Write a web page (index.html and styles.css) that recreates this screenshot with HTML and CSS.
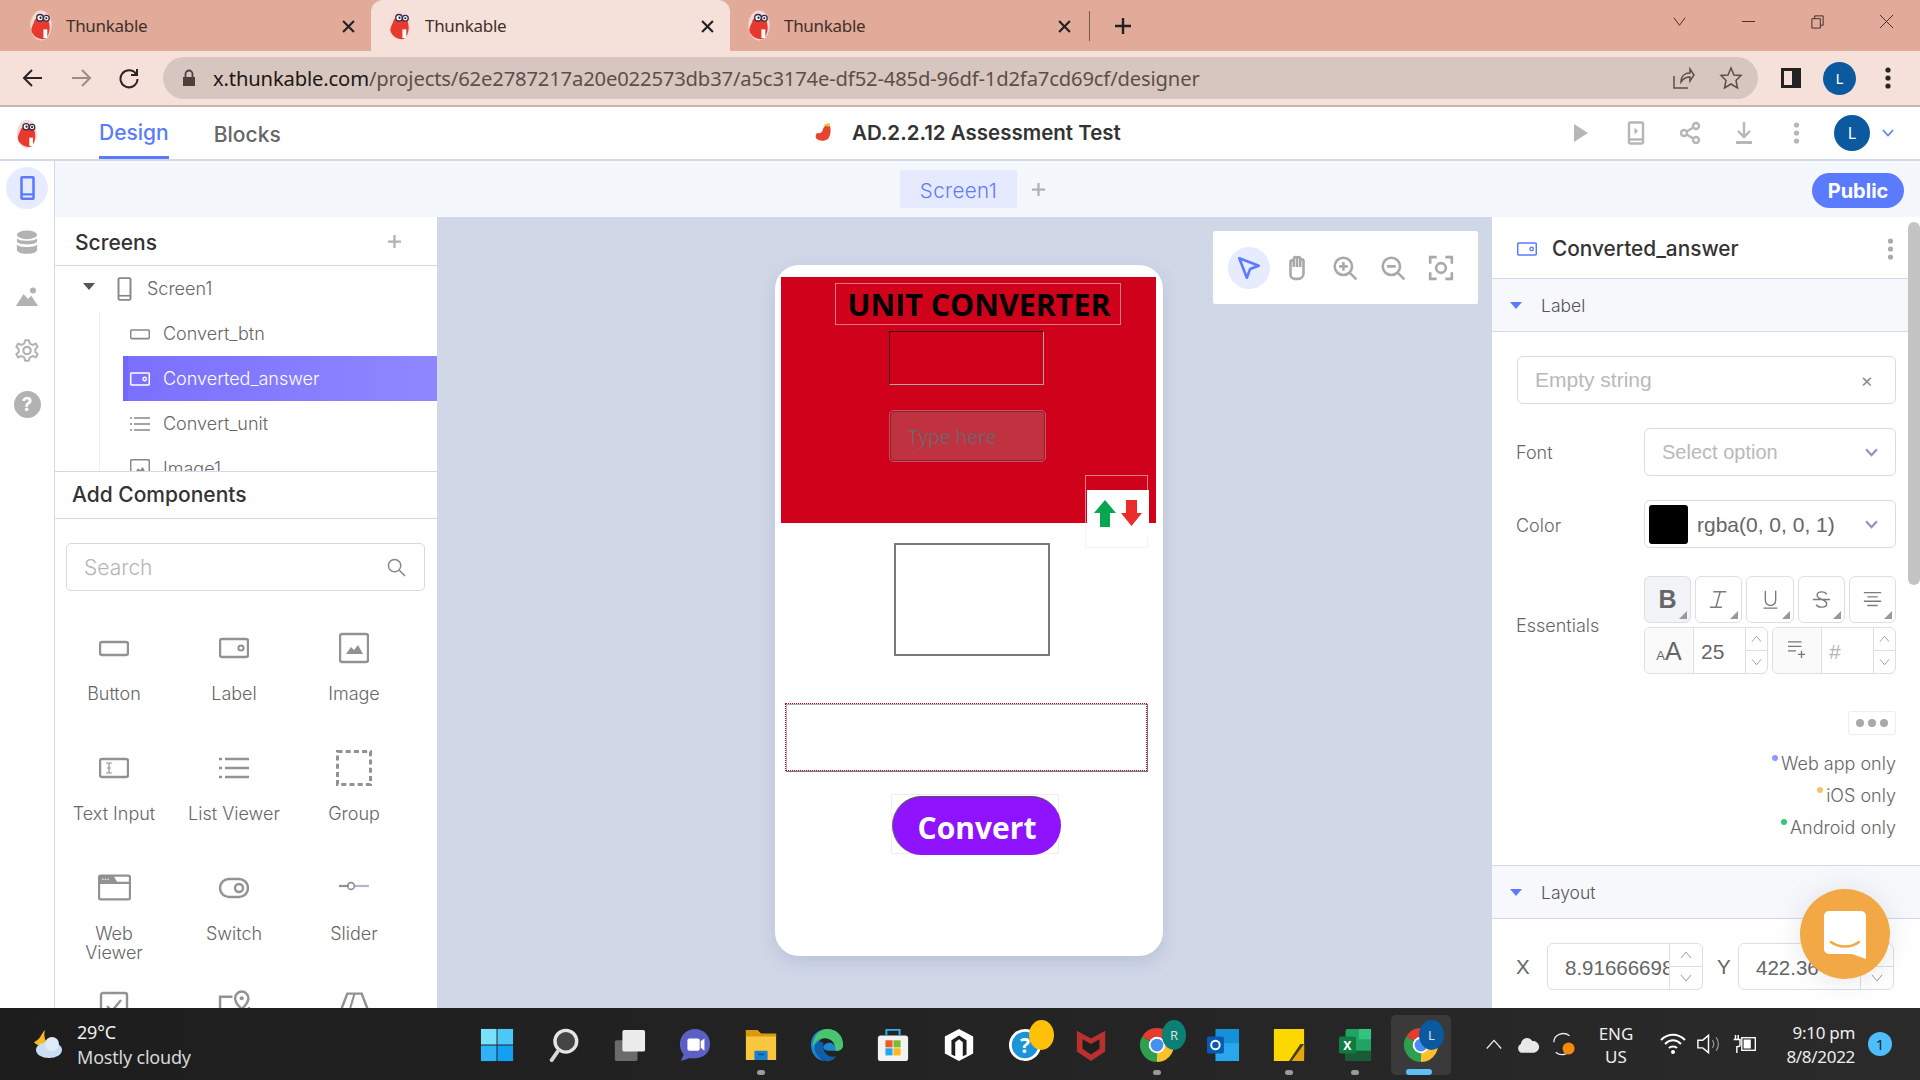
FILE: index.html
```html
<!DOCTYPE html>
<html lang="en">
<head>
<meta charset="utf-8">
<title>Thunkable</title>
<link rel="stylesheet" href="styles.css">
</head>
<body>
<svg class="defs" width="0" height="0">
  <symbol id="worm" viewBox="0 0 24 32">
    <ellipse cx="12" cy="16" rx="11" ry="15.5" fill="#f7d9d6"/>
    <path d="M5 12C6 6 17 6 20 12C22 18 21 26 16 30C10 31 3 27 2 21C2 17 4 15 5 12Z" fill="#e8392f"/>
    <circle cx="11" cy="8" r="3.4" fill="#fff" stroke="#3a2a4a" stroke-width="1.4"/>
    <circle cx="17.5" cy="8.5" r="3" fill="#fff" stroke="#3a2a4a" stroke-width="1.4"/>
    <circle cx="11.5" cy="8" r="1.2" fill="#222"/><circle cx="17.5" cy="8.5" r="1.1" fill="#222"/>
    <rect x="14.5" y="20" width="4" height="9" fill="#fff"/>
  </symbol>
  <symbol id="i-button" viewBox="0 0 30 30"><rect x="1" y="9" width="28" height="13" rx="2" fill="none" stroke="currentColor" stroke-width="2.4"/></symbol>
  <symbol id="i-label" viewBox="0 0 30 30"><rect x="1" y="6" width="28" height="18" rx="2" fill="none" stroke="currentColor" stroke-width="2.4"/><circle cx="22" cy="15" r="2.6" fill="none" stroke="currentColor" stroke-width="2"/></symbol>
  <symbol id="i-image" viewBox="0 0 30 30"><rect x="1" y="1" width="28" height="28" rx="2" fill="none" stroke="currentColor" stroke-width="2.4"/><path d="M7 21L12 14L15 17L19 12L24 21Z" fill="currentColor"/></symbol>
  <symbol id="i-input" viewBox="0 0 30 30"><rect x="1" y="6" width="28" height="18" rx="2" fill="none" stroke="currentColor" stroke-width="2.4"/><path d="M7 10H13M7 20H13M10 10V20M8 15H12" fill="none" stroke="currentColor" stroke-width="1.2"/></symbol>
  <symbol id="i-list" viewBox="0 0 30 30"><path d="M6 6H30M6 15H30M6 24H30" stroke="currentColor" stroke-width="2.4" fill="none"/><path d="M0 6H3M0 15H3M0 24H3" stroke="currentColor" stroke-width="2.4" fill="none"/></symbol>
  <symbol id="i-group" viewBox="0 0 36 36"><rect x="1.5" y="1.5" width="33" height="33" fill="none" stroke="currentColor" stroke-width="3" stroke-dasharray="5 3.2"/></symbol>
  <symbol id="i-web" viewBox="0 0 32 26"><rect x="1" y="1" width="30" height="23" rx="1.5" fill="none" stroke="currentColor" stroke-width="2.2"/><path d="M1 8H31" stroke="currentColor" stroke-width="2.2"/><path d="M1 1H15L19 8H1Z" fill="currentColor"/><path d="M4 4.5H11" stroke="#fff" stroke-width="1" stroke-dasharray="1.5 1"/></symbol>
  <symbol id="i-switch" viewBox="0 0 30 30"><rect x="1" y="6" width="28" height="18" rx="9" fill="none" stroke="currentColor" stroke-width="2.4"/><circle cx="20" cy="15" r="4" fill="none" stroke="currentColor" stroke-width="2.4"/></symbol>
  <symbol id="i-slider" viewBox="0 0 30 30"><path d="M0 13H10" stroke="currentColor" stroke-width="2.2"/><path d="M16 13H30" stroke="#b6b2d2" stroke-width="2.2"/><circle cx="12" cy="13" r="3.4" fill="none" stroke="currentColor" stroke-width="1.6"/></symbol>
  <symbol id="i-check" viewBox="0 0 30 30"><rect x="2" y="2" width="26" height="26" rx="2" fill="none" stroke="currentColor" stroke-width="2.4"/><path d="M8 15L13 20L22 9" fill="none" stroke="currentColor" stroke-width="2.4"/></symbol>
  <symbol id="i-map" viewBox="0 0 32 30"><path d="M14 6H2V29H30V16" fill="none" stroke="currentColor" stroke-width="2.4"/><path d="M23 1a6.5 6.5 0 0 1 6.500 6.500C29.500 12 23 18 23 18S16.500 12 16.500 7.500A6.500 6.500 0 0 1 23 1Z" fill="none" stroke="currentColor" stroke-width="2.4"/><circle cx="23" cy="7.500" r="2" fill="currentColor"/></symbol>
  <symbol id="i-map3" viewBox="0 0 32 30"><path d="M1 24L9 3H23L31 24" fill="none" stroke="currentColor" stroke-width="2.4"/><path d="M16 3L11 20" stroke="currentColor" stroke-width="2"/><circle cx="11" cy="23" r="4" fill="none" stroke="currentColor" stroke-width="2"/></symbol>
  <symbol id="i-phone" viewBox="0 0 20 32"><rect x="2" y="1.500" width="16" height="29" rx="1.500" fill="none" stroke="currentColor" stroke-width="2.600"/><path d="M2 25H18" stroke="currentColor" stroke-width="2.200"/></symbol>
  <symbol id="i-phone-solid" viewBox="0 0 20 32"><rect x="2" y="1.500" width="16" height="29" rx="1.500" fill="none" stroke="currentColor" stroke-width="3.400"/><path d="M2 24.500H18" stroke="currentColor" stroke-width="3"/></symbol>
  <symbol id="i-chrome" viewBox="0 0 32 32">
    <path d="M2.140 8A16 16 0 0 1 29.860 8L16 16Z" fill="#e33b2e"/><path d="M29.860 8A16 16 0 0 1 16 32L16 16Z" fill="#fbc02d"/><path d="M16 32A16 16 0 0 1 2.140 8L16 16Z" fill="#2e9e4f"/>
    <circle cx="16" cy="16" r="7.800" fill="#fff"/><circle cx="16" cy="16" r="6" fill="#4a8df0"/>
  </symbol>
  <symbol id="i-dots" viewBox="0 0 6 24"><circle cx="3" cy="4" r="2.600" fill="currentColor"/><circle cx="3" cy="12" r="2.600" fill="currentColor"/><circle cx="3" cy="20" r="2.600" fill="currentColor"/></symbol>
</svg>

<div class="tabstrip">
  <div class="tab">
    <svg class="favicon"><use href="#worm"/></svg><span class="tab-title">Thunkable</span>
    <svg class="tab-x" viewBox="0 0 12 12"><path d="M1 1L11 11M11 1L1 11"/></svg>
  </div>
  <div class="tab tab-active">
    <svg class="favicon"><use href="#worm"/></svg><span class="tab-title">Thunkable</span>
    <svg class="tab-x" viewBox="0 0 12 12"><path d="M1 1L11 11M11 1L1 11"/></svg>
  </div>
  <div class="tab tab-third">
    <svg class="favicon"><use href="#worm"/></svg><span class="tab-title">Thunkable</span>
    <svg class="tab-x" viewBox="0 0 12 12"><path d="M1 1L11 11M11 1L1 11"/></svg>
  </div>
  <div class="tab-sep"></div>
  <svg class="tab-plus" viewBox="0 0 18 18"><path d="M9 1V17M1 9H17"/></svg>
  <div class="win-controls">
    <svg class="win" viewBox="0 0 16 16"><path d="M2 4L8 12L14 4"/></svg>
    <svg class="win" viewBox="0 0 16 16"><path d="M1 8H15"/></svg>
    <svg class="win" viewBox="0 0 16 16"><path d="M2 5H11V15H2ZM5 5V2H14V12H11"/></svg>
    <svg class="win" viewBox="0 0 16 16"><path d="M1 1L15 15M15 1L1 15"/></svg>
  </div>
</div>

<div class="toolbar">
  <svg class="nav" viewBox="0 0 22 22"><path d="M20 11H3M10 3L2 11L10 19"/></svg>
  <svg class="nav nav-off" viewBox="0 0 22 22"><path d="M2 11H19M12 3L20 11L12 19"/></svg>
  <svg class="nav" viewBox="0 0 22 22"><path d="M18 7A8.500 8.500 0 1 0 19.500 12M19 2V8H13"/></svg>
  <div class="omnibox">
    <svg class="lock" viewBox="0 0 14 18"><path d="M1 8H13V17H1Z" fill="#4a413e"/><path d="M3.500 8V5A3.500 3.500 0 0 1 10.500 5V8" fill="none" stroke="#4a413e" stroke-width="1.800"/></svg>
    <span class="url"><span class="url-host">x.thunkable.com</span>/projects/62e2787217a20e022573db37/a5c3174e-df52-485d-96df-1d2fa7cd69cf/designer</span>
    <svg class="omni-icon" viewBox="0 0 24 24"><path d="M3 10V22H17M10 16C10 10 14 7 19 7V3L23 9L19 15V11C15 11 12 13 10 16Z"/></svg>
    <svg class="omni-icon" viewBox="0 0 24 24"><path d="M12 2L15 9L22 9.500L17 14.500L18.500 22L12 18L5.500 22L7 14.500L2 9.500L9 9Z"/></svg>
  </div>
  <div class="side-panel"></div>
  <div class="avatar avatar-sm">L</div>
  <svg class="tool-dots"><use href="#i-dots"/></svg>
</div>

<header class="appbar">
  <svg class="app-logo"><use href="#worm"/></svg>
  <nav class="app-tabs">
    <span class="app-tab app-tab-on">Design</span>
    <span class="app-tab app-tab-off">Blocks</span>
  </nav>
  <div class="app-title">
    <svg class="title-logo" viewBox="0 0 20 22"><path d="M4 12C7 13 9 12 10 8C11 5 14 3 17 5C18 9 18 14 15 18C11 21 5 20 3 17C2 15 3 13 4 12Z" fill="#e8452f"/><path d="M10 4L17 2L16 6Z" fill="#f2b632"/></svg>
    <span>AD.2.2.12 Assessment Test</span>
  </div>
  <div class="app-actions">
    <svg class="act" viewBox="0 0 24 24"><path class="fill" d="M6 3L20 12L6 21Z"/></svg>
    <svg class="act" viewBox="0 0 24 24"><rect class="line" x="5" y="1.500" width="14" height="21" rx="1.500"/><path class="line" d="M5 18.500H19"/><path class="fill" d="M10.500 6.500L14 10L10.500 13.500Z"/></svg>
    <svg class="act" viewBox="0 0 24 24"><circle class="line" cx="18" cy="5" r="3"/><circle class="line" cx="6" cy="12" r="3"/><circle class="line" cx="18" cy="19" r="3"/><path class="line" d="M8.600 10.500L15.400 6.500M8.600 13.500L15.400 17.500"/></svg>
    <svg class="act" viewBox="0 0 24 24"><path class="line" d="M12 1V15M6 10L12 16L18 10"/><path class="line thick" d="M4 21.500H20"/></svg>
    <svg class="act act-dots"><use href="#i-dots"/></svg>
    <div class="avatar avatar-lg">L</div>
    <svg class="act-chev" viewBox="0 0 12 8"><path d="M1 1L6 6.500L11 1"/></svg>
  </div>
</header>

<div class="main">
  <aside class="rail">
    <div class="rail-item rail-on"><svg class="rail-phone"><use href="#i-phone-solid"/></svg></div>
    <div class="rail-item">
      <svg class="rail-ic" viewBox="0 0 24 26"><ellipse cx="12" cy="5" rx="10.500" ry="4.500" fill="#b2b2b2"/><path d="M1.500 8.500C3 12 21 12 22.500 8.500V12C21 16 3 16 1.500 12ZM1.500 15C3 18.500 21 18.500 22.500 15V21C21 26 3 26 1.500 21Z" fill="#b2b2b2"/></svg>
    </div>
    <div class="rail-item">
      <svg class="rail-ic" viewBox="0 0 28 24"><circle cx="21" cy="5" r="3.500" fill="#b2b2b2"/><path d="M1 23L10 9L15 15L19 11L27 23Z" fill="#b2b2b2"/></svg>
    </div>
    <div class="rail-item">
      <svg class="rail-ic" viewBox="0 0 26 26"><circle cx="13" cy="13" r="4" fill="none" stroke="#b2b2b2" stroke-width="2.400"/><path d="M11 2H15L16 5.500L19 7L22.500 5.500L24.500 9L22 11.500V14.500L24.500 17L22.500 20.500L19 19L16 20.500L15 24H11L10 20.500L7 19L3.500 20.500L1.500 17L4 14.500V11.500L1.500 9L3.500 5.500L7 7L10 5.500Z" fill="none" stroke="#b2b2b2" stroke-width="2.200" stroke-linejoin="round"/></svg>
    </div>
    <div class="rail-item">
      <div class="rail-help">?</div>
    </div>
  </aside>

  <div class="workspace">
    <div class="subbar">
      <div class="screen-tab">Screen1</div>
      <svg class="subbar-plus" viewBox="0 0 16 16"><path d="M8 1V15M1 8H15"/></svg>
      <div class="public">Public</div>
    </div>
    <div class="work">
      <section class="left">
        <div class="screens-head">
          <span>Screens</span>
          <svg class="screens-plus" viewBox="0 0 16 16"><path d="M8 1V15M1 8H15"/></svg>
        </div>
        <div class="tree">
          <div class="tree-guide"></div>
          <div class="tree-root">
            <span class="caret"></span>
            <svg class="tree-phone"><use href="#i-phone"/></svg>
            <span>Screen1</span>
          </div>
          <div class="tree-row"><svg class="tree-ic"><use href="#i-button"/></svg><span>Convert_btn</span></div>
          <div class="tree-row tree-sel"><svg class="tree-ic"><use href="#i-label"/></svg><span>Converted_answer</span></div>
          <div class="tree-row"><svg class="tree-ic"><use href="#i-list"/></svg><span>Convert_unit</span></div>
          <div class="tree-row"><svg class="tree-ic"><use href="#i-image"/></svg><span>Image1</span></div>
        </div>
        <div class="add-head">Add Components</div>
        <div class="search-wrap">
          <div class="search">
            <span>Search</span>
            <svg class="search-ic" viewBox="0 0 20 20"><circle cx="8" cy="8" r="6.500"/><path d="M13 13L19 19"/></svg>
          </div>
        </div>
        <div class="comp-grid">
          <div class="comp"><svg class="comp-ic"><use href="#i-button"/></svg><span>Button</span></div>
          <div class="comp"><svg class="comp-ic"><use href="#i-label"/></svg><span>Label</span></div>
          <div class="comp"><svg class="comp-ic"><use href="#i-image"/></svg><span>Image</span></div>
          <div class="comp"><svg class="comp-ic"><use href="#i-input"/></svg><span>Text Input</span></div>
          <div class="comp"><svg class="comp-ic"><use href="#i-list"/></svg><span>List Viewer</span></div>
          <div class="comp"><svg class="comp-ic comp-ic-lg"><use href="#i-group"/></svg><span>Group</span></div>
          <div class="comp"><svg class="comp-ic comp-ic-web"><use href="#i-web"/></svg><span>Web<br>Viewer</span></div>
          <div class="comp"><svg class="comp-ic"><use href="#i-switch"/></svg><span>Switch</span></div>
          <div class="comp"><svg class="comp-ic"><use href="#i-slider"/></svg><span>Slider</span></div>
          <div class="comp comp-last"><svg class="comp-ic"><use href="#i-check"/></svg></div>
          <div class="comp comp-last"><svg class="comp-ic comp-ic-web"><use href="#i-map"/></svg></div>
          <div class="comp comp-last"><svg class="comp-ic comp-ic-web"><use href="#i-map3"/></svg></div>
        </div>
      </section>

      <section class="canvas">
        <div class="floatbar">
          <div class="fb fb-on"><svg viewBox="0 0 24 24"><path class="fb-blue" d="M3 3L21 10L13 13L10 21Z"/></svg></div>
          <div class="fb"><svg viewBox="0 0 24 24"><path class="fb-gray" d="M6 13V6.500a1.500 1.500 0 0 1 3 0V11V3.500a1.500 1.500 0 0 1 3 0V11V3.500a1.500 1.500 0 0 1 3 0V11V5.500a1.500 1.500 0 0 1 3 0V17a5 5 0 0 1-5 5H10a4 4 0 0 1-4-4Z"/></svg></div>
          <div class="fb"><svg viewBox="0 0 24 24"><circle class="fb-gray" cx="10.500" cy="10.500" r="8"/><path class="fb-gray" d="M16.500 16.500L22.500 22.500M10.500 6.500V14.500M6.500 10.500H14.500"/></svg></div>
          <div class="fb"><svg viewBox="0 0 24 24"><circle class="fb-gray" cx="10.500" cy="10.500" r="8"/><path class="fb-gray" d="M16.500 16.500L22.500 22.500M6.500 10.500H14.500"/></svg></div>
          <div class="fb"><svg viewBox="0 0 24 24"><circle class="fb-gray" cx="12" cy="12" r="4.500"/><path class="fb-gray" d="M2 8V2H8M16 2H22V8M22 16V22H16M8 22H2V16"/></svg></div>
        </div>
        <div class="phone">
          <div class="ph-red"></div>
          <div class="ph-title">UNIT CONVERTER</div>
          <div class="ph-box1"></div>
          <div class="ph-input">Type here</div>
          <div class="ph-arrow-out"></div>
          <div class="ph-arrow">
            <svg class="ph-arrow-svg" viewBox="0 0 48 27"><path d="M11 0L22 13H16V27H6V13H0Z" fill="#08a650"/><path d="M32 0H43V13H48L37.500 26L27 13H32Z" fill="#ed2a2a"/></svg>
          </div>
          <div class="ph-box2"></div>
          <div class="ph-box3"></div>
          <div class="ph-btn-out"></div>
          <div class="ph-btn">Convert</div>
        </div>
      </section>

      <section class="right">
        <div class="r-head">
          <svg class="r-head-ic"><use href="#i-label"/></svg>
          <span>Converted_answer</span>
          <svg class="r-head-dots"><use href="#i-dots"/></svg>
        </div>
        <div class="r-section"><span class="r-caret"></span><span>Label</span></div>
        <div class="r-body">
          <div class="field field-wide"><span class="ph-text ph-text-lg">Empty string</span><span class="field-x">×</span></div>
          <div class="r-row r-row-font">
            <span class="r-label">Font</span>
            <div class="field field-sel"><span class="ph-text">Select option</span><svg class="sel-chev" viewBox="0 0 12 8"><path d="M1 1L6 6.500L11 1"/></svg></div>
          </div>
          <div class="r-row r-row-color">
            <span class="r-label r-label-low">Color</span>
            <div class="field field-sel field-color"><span class="swatch"></span><span class="color-val">rgba(0, 0, 0, 1)</span><svg class="sel-chev" viewBox="0 0 12 8"><path d="M1 1L6 6.500L11 1"/></svg></div>
          </div>
          <div class="r-row r-row-ess">
            <span class="r-label">Essentials</span>
            <div class="ess">
              <div class="ess-top">
                <div class="ess-btn ess-on"><b class="ess-b">B</b></div>
                <div class="ess-btn"><svg class="ess-ic" viewBox="0 0 22 22"><path d="M5 2H20M13 2L8 20M1 20H15"/></svg></div>
                <div class="ess-btn"><svg class="ess-ic" viewBox="0 0 22 22"><path d="M5 1V12A6 6 0 0 0 17 12V1M3 21H19"/></svg></div>
                <div class="ess-btn"><svg class="ess-ic" viewBox="0 0 22 22"><path d="M17 5C15 1 6 1 6 6C6 12 17 10 17 16C17 21 7 21 5 17M1 11H21"/></svg></div>
                <div class="ess-btn"><svg class="ess-ic" viewBox="0 0 22 22"><path d="M1 3H21M5 8H17M1 13H21M5 18H17"/></svg></div>
              </div>
              <div class="ess-bot">
                <div class="spin">
                  <div class="spin-lead"><span class="aa-s">A</span><span class="aa-l">A</span></div>
                  <div class="spin-val">25</div>
                  <div class="spin-arrows"><svg viewBox="0 0 12 8"><path d="M1 7L6 1L11 7"/></svg><svg viewBox="0 0 12 8"><path d="M1 1L6 7L11 1"/></svg></div>
                </div>
                <div class="spin">
                  <div class="spin-lead"><svg class="lh-ic" viewBox="0 0 20 20"><path d="M0 2H15M0 7H15M0 12H9M11 16H19M15 12V20"/></svg></div>
                  <div class="spin-val spin-ph">#</div>
                  <div class="spin-arrows"><svg viewBox="0 0 12 8"><path d="M1 7L6 1L11 7"/></svg><svg viewBox="0 0 12 8"><path d="M1 1L6 7L11 1"/></svg></div>
                </div>
              </div>
            </div>
          </div>
          <div class="more"><i></i><i></i><i></i></div>
          <div class="legend">
            <div class="leg"><i class="dot dot-web"></i>Web app only</div>
            <div class="leg"><i class="dot dot-ios"></i>iOS only</div>
            <div class="leg"><i class="dot dot-and"></i>Android only</div>
          </div>
        </div>
        <div class="r-section r-section-b"><span class="r-caret"></span><span>Layout</span></div>
        <div class="xy">
          <span class="xy-l">X</span>
          <div class="xy-field"><span class="xy-val">8.91666698</span><div class="spin-arrows"><svg viewBox="0 0 12 8"><path d="M1 7L6 1L11 7"/></svg><svg viewBox="0 0 12 8"><path d="M1 1L6 7L11 1"/></svg></div></div>
          <span class="xy-l xy-y">Y</span>
          <div class="xy-field"><span class="xy-val">422.36</span><div class="spin-arrows"><svg viewBox="0 0 12 8"><path d="M1 7L6 1L11 7"/></svg><svg viewBox="0 0 12 8"><path d="M1 1L6 7L11 1"/></svg></div></div>
        </div>
        <div class="r-thumb"></div>
        <div class="chat">
          <svg class="chat-ic" viewBox="0 0 42 48"><path d="M5 0H37A5 5 0 0 1 42 5V48L28 43H5A5 5 0 0 1 0 38V5A5 5 0 0 1 5 0Z" fill="#fff"/><path d="M7 31C15 37 27 37 35 31" fill="none" stroke="#f2a945" stroke-width="2.600" stroke-linecap="round"/></svg>
        </div>
      </section>
    </div>
  </div>
</div>

<footer class="taskbar">
  <div class="weather">
    <svg class="weather-ic" viewBox="0 0 34 30"><path d="M15 1C11 5 10 11 4 13C7 18 14 17 17 13C14 10 14 5 15 1Z" fill="#f6b81d"/><ellipse cx="19" cy="21" rx="13" ry="8" fill="#c9def2"/><circle cx="22" cy="15" r="7" fill="#dfecf8"/></svg>
    <div class="weather-txt"><div>29°C</div><div>Mostly cloudy</div></div>
  </div>
  <div class="tb-icons">
    <div class="tb"><svg viewBox="0 0 36 36"><path d="M1 1H17.500V17.500H1Z" fill="#7be0fb"/><path d="M18.500 1H35V17.500H18.500Z" fill="#4cc7f7"/><path d="M1 18.500H17.500V35H1Z" fill="#2fb2f6"/><path d="M18.500 18.500H35V35H18.500Z" fill="#12a0f2"/></svg></div>
    <div class="tb"><svg viewBox="0 0 36 36"><circle cx="21" cy="14" r="11.500" fill="#454545" stroke="#e6e6e6" stroke-width="3.600"/><path d="M13 24L6 34" stroke="#d6d6d6" stroke-width="4" stroke-linecap="round"/></svg></div>
    <div class="tb"><svg viewBox="0 0 36 36"><rect x="3" y="13" width="24" height="22" rx="2" fill="#6b6b6b"/><rect x="11" y="2" width="24" height="23" rx="2" fill="#ececec"/></svg></div>
    <div class="tb"><svg viewBox="0 0 36 36"><path d="M18 1C27 1 34 8 34 17C34 26 27 32 18 32H12L3 35L6 28C3 25 2 21 2 17C2 8 9 1 18 1Z" fill="#5c5fc4"/><rect x="10" y="11" width="13" height="13" rx="2" fill="#fff"/><path d="M24 14L28 11V24L24 21Z" fill="#fff"/></svg></div>
    <div class="tb tb-run"><svg viewBox="0 0 36 36"><path d="M2 2H14L18 6H34V34H2Z" fill="#f9c63e"/><path d="M2 2H14L18 6H34V9H2Z" fill="#d99a0f"/><rect x="11" y="24" width="14" height="10" rx="1" fill="#1a7fd0"/><path d="M15 28H21" stroke="#0c4f8a" stroke-width="1.500"/></svg></div>
    <div class="tb"><svg viewBox="0 0 36 36"><path d="M18 1C28 1 35 8 35 18C35 21 33 24 29 24H20C16 24 14 22 14 20C16 15 24 14 26 19C26 11 19 8 13 11C6 15 4 26 12 33C13.500 34 15 35 17 35C7 35 1 27 1 18C1 8 8 1 18 1Z" fill="#1c86d1"/><path d="M18 1C28 1 35 8 35 18C35 21 33 24 29 24H27C28 14 19 8 10 12C6 14 4 18 3 21C3 10 9 1 18 1Z" fill="#49c66c"/><path d="M14 20C14 27 21 32 28 30C25 34 20 36 17 35C8 33 4 25 5 18C8 13 16 13 14 20Z" fill="#0f5fa8"/></svg></div>
    <div class="tb"><svg viewBox="0 0 36 36"><rect x="2" y="8" width="32" height="27" rx="3" fill="#f2f2f2"/><path d="M11 8V2H25V8" fill="none" stroke="#29b6ee" stroke-width="2"/><rect x="10" y="13" width="7.500" height="7.500" fill="#ee5a24"/><rect x="18.500" y="13" width="7.500" height="7.500" fill="#7cbb2c"/><rect x="10" y="21.500" width="7.500" height="7.500" fill="#22a5f1"/><rect x="18.500" y="21.500" width="7.500" height="7.500" fill="#fdb913"/></svg></div>
    <div class="tb"><svg viewBox="0 0 36 36"><path d="M18 1L33 9V27L18 35L3 27V9Z" fill="#fff"/><path d="M18 8L26 13V28L22 30V15L18 12L14 15V30L10 28V13Z" fill="#1f1f1f"/></svg></div>
    <div class="tb tb-wrap"><svg viewBox="0 0 36 36"><circle cx="18" cy="18" r="17" fill="#fff"/><circle cx="18" cy="18" r="14" fill="#1b95d8"/><text class="help-q" x="18" y="26">?</text></svg><i class="tb-badge tb-badge-y"></i></div>
    <div class="tb"><svg viewBox="0 0 36 36"><path d="M3 3L18 11L33 3V25L18 35L3 25Z" fill="#b9302e"/><path d="M9 12L18 17L27 12V22L18 28L9 22Z" fill="#1f1f1f"/></svg></div>
    <div class="tb tb-run tb-wrap"><svg><use href="#i-chrome"/></svg><i class="tb-badge tb-badge-t">R</i></div>
    <div class="tb"><svg viewBox="0 0 36 36"><rect x="10" y="1" width="25" height="20" fill="#1590d6"/><path d="M10 16H35V35H10Z" fill="#28a8ea"/><rect x="1" y="9" width="18" height="18" rx="2" fill="#0a5ab5"/><circle cx="10" cy="18" r="4.500" fill="none" stroke="#fff" stroke-width="2"/></svg></div>
    <div class="tb tb-run"><svg viewBox="0 0 36 36"><path d="M2 1H34V27L26 35H2Z" fill="#fdd800"/><path d="M34 17L21 35H34Z" fill="#e3a90c"/><path d="M18 35L30 17H34L21 35Z" fill="#4a3d12"/></svg></div>
    <div class="tb tb-run"><svg viewBox="0 0 36 36"><rect x="8" y="1" width="27" height="34" rx="2" fill="#21a366"/><path d="M22 1H35V12H22Z" fill="#33c481"/><path d="M8 24H35V35H8Z" fill="#185c37"/><rect x="1" y="9" width="18" height="18" rx="2" fill="#107c41"/><text class="x-t" x="10" y="23">X</text></svg></div>
    <div class="tb tb-active tb-wrap"><svg><use href="#i-chrome"/></svg><i class="tb-badge tb-badge-b">L</i></div>
  </div>
  <div class="tray">
    <svg class="tray-up" viewBox="0 0 20 12"><path d="M2 11L10 2L18 11"/></svg>
    <svg class="tray-cloud" viewBox="0 0 26 22"><path d="M6 20A5 5 0 0 1 6 11C7 4 15 3 18 8A6 6 0 0 1 20 20Z" fill="#e8e8e8"/></svg>
    <svg class="tray-sync" viewBox="0 0 26 32"><path d="M2 14C2 6 12 2 19 7M20 20C20 27 10 30 4 25" fill="none" stroke="#e8e8e8" stroke-width="1.500"/><circle cx="18" cy="21" r="6.500" fill="#f58a07"/></svg>
    <div class="lang"><div>ENG</div><div>US</div></div>
    <svg class="tray-wifi" viewBox="0 0 26 22"><path d="M1 7C8 0 18 0 25 7M5 11C10 6 16 6 21 11M9 15C11 13 15 13 17 15" fill="none" stroke="#fff" stroke-width="2"/><circle cx="13" cy="19" r="2" fill="#fff"/></svg>
    <svg class="tray-vol" viewBox="0 0 26 24"><path d="M2 8H7L13 3V21L7 16H2Z" fill="none" stroke="#fff" stroke-width="1.500"/><path d="M17 8C19 10 19 14 17 16M21 5C24 9 24 15 21 19" fill="none" stroke="#999" stroke-width="1.300"/></svg>
    <svg class="tray-bat" viewBox="0 0 30 24"><path d="M8 2V7M5 2V7M3 7H10V13C10 15 8 15 6.500 15V22" fill="none" stroke="#fff" stroke-width="1.600"/><rect x="12" y="5" width="15" height="14" fill="none" stroke="#fff" stroke-width="1.500"/><rect x="14" y="7" width="8" height="10" fill="#fff"/></svg>
    <div class="clock"><div>9:10 pm</div><div>8/8/2022</div></div>
    <div class="notif">1</div>
  </div>
</footer>
</body>
</html>
```

FILE: styles.css
```css
* { box-sizing: border-box; }
html, body { margin: 0; padding: 0; }
body {
  width: 1920px;
  height: 1080px;
  overflow: hidden;
  display: flex;
  flex-direction: column;
  font-family: Inter, "Liberation Sans", sans-serif;
  background: #fff;
  color: #333;
}
.defs { position: absolute; }

/* browser tabs */
.tabstrip { height: 51px; flex: none; background: #e2aa98; display: flex; align-items: stretch; }
.tab { width: 358px; display: flex; align-items: center; padding-left: 29px; position: relative; font-family: "Noto Sans", sans-serif; }
.tab:first-child { width: 371px; }
.tab-active { width: 359px; padding-left: 17px; background: #f5e1da; border-radius: 12px 12px 0 0; }
.tab-third { width: 355px; padding-left: 17px; }
.favicon { width: 24px; height: 31px; flex: none; }
.tab-title { margin-left: 13px; font-size: 17px; color: #40302c; letter-spacing: -0.3px; }
.tab-x { position: absolute; right: 16px; top: 20px; width: 13px; height: 13px; fill: none; stroke: #222; stroke-width: 2; }
.tab-third .tab-x { right: 14px; }
.tab-sep { width: 1px; height: 30px; margin: 11px 0 0 4px; background: #6d5a54; }
.tab-plus { width: 18px; height: 18px; margin: 17px 0 0 24px; fill: none; stroke: #222; stroke-width: 2.400; }
.win-controls { margin-left: auto; display: flex; gap: 54px; padding: 14px 26px 0 0; }
.win { width: 15px; height: 15px; fill: none; stroke: #3a2c28; stroke-width: 1; }

/* browser toolbar */
.toolbar { height: 56px; flex: none; background: #f5e1da; border-bottom: 2px solid #c8b5ad; display: flex; align-items: center; padding: 0 0 0 22px; }
.nav { width: 22px; height: 22px; margin-right: 26px; fill: none; stroke: #2b2422; stroke-width: 2; flex: none; }
.nav-off { stroke: #9b8c87; }
.omnibox { width: 1595px; height: 42px; margin: 0 0 0 -3px; background: #d7c6bf; border-radius: 21px; display: flex; align-items: center; padding: 0 0 0 19px; }
.lock { width: 14px; height: 18px; flex: none; }
.url { margin-left: 17px; font-family: "Noto Sans", sans-serif; font-size: 20.200px; letter-spacing: -0.15px; color: #5b4e4a; white-space: nowrap; }
.url-host { color: #1d1715; }
.omni-icon { width: 24px; height: 24px; fill: none; stroke: #5b4e4a; stroke-width: 1.500; flex: none; }
.omni-icon:nth-of-type(2) { margin-left: auto; margin-right: 24px; }
.omni-icon:last-child { margin-right: 15px; }
.side-panel { width: 20px; height: 20px; margin-left: 23px; border: 3px solid #222; border-right-width: 9px; flex: none; }
.avatar { border-radius: 50%; background: #0b5aa0; color: #fff; display: flex; align-items: center; justify-content: center; flex: none; font-family: "Noto Sans", sans-serif; }
.avatar-sm { width: 33px; height: 33px; margin-left: 22px; font-size: 15px; }
.tool-dots { width: 6px; height: 24px; margin-left: 29px; color: #2b2422; }

/* app header */
.appbar { height: 54px; flex: none; background: #fff; border-bottom: 2px solid #d2d9ec; display: flex; align-items: stretch; position: relative; }
.app-logo { width: 22px; height: 30px; margin: 12px 0 0 16px; flex: none; }
.app-tabs { display: flex; gap: 45px; margin-left: 61px; }
.app-tab { font-size: 21px; font-weight: 500; color: #666; padding-top: 13px; height: 52px; }
.app-tab-off { padding-top: 15px; }
.app-tab-on { color: #5b7bff; border-bottom: 3px solid #5b7bff; }
.app-title { position: absolute; left: 812px; top: 9px; display: flex; align-items: center; gap: 18px; font-size: 20.500px; font-weight: 600; color: #333; height: 32px; }
.title-logo { width: 22px; height: 22px; flex: none; }
.app-actions { margin-left: auto; display: flex; align-items: center; padding-right: 26px; }
.act { width: 24px; height: 24px; margin-right: 30px; flex: none; overflow: visible; }
.act:first-child { margin-left: -2px; margin-right: 32px; }
.act .fill { fill: #b6b6b6; }
.act .line { fill: none; stroke: #b6b6b6; stroke-width: 2.400; }
.act .thick { stroke-width: 3; }
.act-dots { width: 7px; height: 24px; color: #b6b6b6; margin: 0 0 0 7px; }
.avatar-lg { width: 36px; height: 36px; margin-left: 34px; font-size: 16px; }
.act-chev { width: 12px; height: 8px; margin-left: 12px; fill: none; stroke: #5b7bff; stroke-width: 1.600; }

/* main */
.main { flex: 1; min-height: 0; display: flex; }
.rail { width: 55px; flex: none; background: #fff; border-right: 1px solid #d2d9ec; display: flex; flex-direction: column; }
.rail-item { height: 54px; display: flex; align-items: center; justify-content: center; }
.rail-on::before { content: ""; position: absolute; width: 42px; height: 42px; border-radius: 50%; background: #e6ebff; }
.rail-phone { width: 15px; height: 24px; color: #5b7bff; position: relative; }
.rail-ic { width: 24px; height: 25px; }
.rail-help { width: 27px; height: 27px; border-radius: 50%; background: #b2b2b2; color: #fff; font-weight: 700; font-size: 19px; display: flex; align-items: center; justify-content: center; }

.workspace { flex: 1; min-width: 0; display: flex; flex-direction: column; }
.subbar { height: 56px; flex: none; background: #f4f7fc; position: relative; display: flex; align-items: center; padding-left: 845px; }
.screen-tab { width: 117px; height: 38px; padding-top: 2px; background: #e6eaff; color: #5b7bff; border-radius: 2px; font-size: 20.500px; letter-spacing: 0.4px; font-weight: 300; display: flex; align-items: center; justify-content: center; }
.subbar-plus { width: 15px; height: 15px; margin-left: 14px; fill: none; stroke: #b2b2b2; stroke-width: 2.400; }
.public { margin: 2px 16px 0 auto; padding-top: 1px; width: 92px; height: 35px; background: #5b7bff; color: #fff; border-radius: 18px; font-weight: 700; font-size: 20px; display: flex; align-items: center; justify-content: center; }
.work { flex: 1; min-height: 0; display: flex; }

/* left panel */
.left { width: 382px; flex: none; background: #fff; display: flex; flex-direction: column; overflow: hidden; }
.screens-head { height: 49px; flex: none; border-bottom: 1px solid #d2d9ec; display: flex; align-items: center; justify-content: space-between; padding: 2px 35px 0 20px; font-size: 21px; font-weight: 500; color: #333; }
.screens-plus { width: 15px; height: 15px; margin-top: -2px; fill: none; stroke: #b2b2b2; stroke-width: 2.400; }
.tree { height: 206px; flex: none; border-bottom: 1px solid #d2d9ec; overflow: hidden; position: relative; font-weight: 300; font-size: 18px; color: #666; }
.tree-guide { position: absolute; left: 44px; top: 45px; bottom: 0; width: 1px; background: #eee; }
.tree-root { height: 45px; display: flex; align-items: center; padding-left: 28px; }
.caret { width: 0; height: 0; border-left: 6px solid transparent; border-right: 6px solid transparent; border-top: 7px solid #555; margin-top: -4px; }
.tree-phone { width: 15px; height: 24px; margin: 0 15px 0 22px; color: #888; }
.tree-row { height: 45px; margin-left: 68px; display: flex; align-items: center; padding-left: 7px; gap: 13px; }
.tree-ic { width: 20px; height: 20px; color: #888; flex: none; }
.tree-sel { background: linear-gradient(90deg, #7166ff 0, #7166ff 5px, #7b70ff 5px, #8f87ff 100%); color: #fff; }
.tree-sel .tree-ic { color: #fff; }
.add-head { height: 47px; flex: none; border-bottom: 1px solid #d2d9ec; display: flex; align-items: center; padding: 0 0 2px 17px; font-size: 21px; font-weight: 500; color: #333; }
.search-wrap { padding: 24px 12px 0 11px; flex: none; }
.search { height: 48px; border: 1px solid #d9d9d9; border-radius: 5px; display: flex; align-items: center; justify-content: space-between; padding: 0 18px 0 17px; color: #b5b5b5; font-size: 21px; font-weight: 300; }
.search-ic { width: 19px; height: 19px; fill: none; stroke: #888; stroke-width: 1.600; }
.comp-grid { display: grid; grid-template-columns: repeat(3, 120px); grid-auto-rows: 120px; padding-top: 17px; margin-left: -1px; }
.comp { display: flex; flex-direction: column; align-items: center; padding-top: 22px; font-size: 18px; font-weight: 300; line-height: 19px; color: #666; text-align: center; }
.comp-ic { width: 30px; height: 36px; color: #929292; margin-bottom: 18px; flex: none; }
.comp-ic-lg { width: 36px; height: 36px; }
.comp-ic-web { width: 33px; height: 36px; }
.comp-last { padding-top: 20px; }

/* canvas */
.canvas { width: 1055px; flex: none; background: #d0d7e7; position: relative; overflow: hidden; border-left: 0; }
.floatbar { position: absolute; left: 776px; top: 14px; width: 265px; height: 73px; background: #fff; border-radius: 2px; display: flex; align-items: center; padding-left: 12px; }
.fb { width: 48px; height: 42px; display: flex; align-items: center; justify-content: center; }
.fb svg { width: 26px; height: 26px; position: relative; }
.fb-on::before { content: ""; position: absolute; width: 42px; height: 42px; border-radius: 50%; background: #e6ebff; }
.fb-blue { fill: none; stroke: #5b7bff; stroke-width: 2.400; stroke-linejoin: round; }
.fb-gray { fill: none; stroke: #a9a9a9; stroke-width: 2.400; }

.phone { position: absolute; left: 338px; top: 48px; width: 388px; height: 691px; background: #fff; border-radius: 24px; box-shadow: 0 6px 16px rgba(120, 135, 175, 0.25); }
.ph-red { position: absolute; left: 6px; top: 12px; width: 375px; height: 246px; background: #d0021b; }
.ph-title { position: absolute; left: 60px; top: 18px; width: 286px; height: 42px; padding-left: 2px; border: 1px solid rgba(240, 240, 240, 0.5); font-family: "Open Sans", sans-serif; font-weight: 700; font-size: 30.400px; line-height: 41px; color: #000; text-align: center; white-space: nowrap; }
.ph-box1 { position: absolute; left: 114px; top: 66px; width: 155px; height: 54px; border: 1px solid; border-color: #3a0a10 #b9a5a8 #b9a5a8 #3a0a10; }
.ph-input { position: absolute; left: 115px; top: 146px; width: 155px; height: 50px; background: #c0323f; border: 1px solid #7e2a35; outline: 1px solid rgba(240, 240, 240, 0.3); border-radius: 4px; padding-left: 17px; font-family: "Open Sans", sans-serif; font-size: 19.500px; letter-spacing: -0.2px; line-height: 50px; color: #77606a; }
.ph-arrow-out { position: absolute; left: 310px; top: 210px; width: 63px; height: 73px; border: 1px solid rgba(235, 235, 235, 0.55); }
.ph-arrow { position: absolute; left: 312px; top: 225px; width: 62px; height: 47px; background: #fff; padding: 10px 0 0 7px; }
.ph-arrow-svg { width: 48px; height: 27px; display: block; }
.ph-box2 { position: absolute; left: 119px; top: 278px; width: 156px; height: 113px; border: 2px solid #787878; }
.ph-box3 { position: absolute; left: 10px; top: 438px; width: 362px; height: 68px; border: 1px dotted #d0021b; box-shadow: 1px 1px 0 #777, inset 1px 1px 0 rgba(120, 120, 120, 0.6); }
.ph-btn-out { position: absolute; left: 116px; top: 529px; width: 168px; height: 60px; border: 1px solid #eee; }
.ph-btn { position: absolute; left: 117px; top: 531px; width: 169px; height: 59px; background: #9013fe; border-radius: 30px; border-top: 1px solid #555; border-left: 1px solid #666; color: #fff; font-family: "Open Sans", sans-serif; font-weight: 700; font-size: 30px; line-height: 61px; text-align: center; }

/* right panel */
.right { flex: 1; min-width: 0; background: #fff; position: relative; overflow: hidden; }
.r-head { height: 62px; border-bottom: 1px solid #d2d9ec; display: flex; align-items: center; padding: 2px 0 0 25px; font-size: 20.800px; font-weight: 500; color: #333; }
.r-head-ic { width: 20px; height: 20px; color: #5b7bff; margin-right: 15px; flex: none; }
.r-head-dots { width: 7px; height: 24px; color: #ababab; margin-left: auto; margin-right: 26px; }
.r-section { height: 53px; background: #f7f8fc; border-bottom: 1px solid #d2d9ec; display: flex; align-items: center; padding-left: 18px; font-size: 17.500px; font-weight: 300; color: #555; }
.r-section-b { height: 54px; border-top: 1px solid #d2d9ec; }
.r-caret { width: 0; height: 0; border-left: 6px solid transparent; border-right: 6px solid transparent; border-top: 7px solid #5b7bff; margin-right: 19px; }
.r-body { height: 533px; padding: 24px 24px 0 25px; }
.field { border: 1px solid #d9dbe2; border-radius: 6px; height: 48px; display: flex; align-items: center; font-size: 20px; }
.field-wide { width: 379px; padding: 0 22px 0 17px; justify-content: space-between; }
.ph-text { color: #b9b9b9; font-family: "Liberation Sans", sans-serif; }
.ph-text-lg { font-size: 21px; }
.field-x { color: #8e8e8e; font-size: 19px; }
.r-row { display: flex; align-items: center; justify-content: space-between; }
.r-row-font { margin-top: 24px; }
.r-row-color { margin-top: 24px; }
.r-row-ess { margin-top: 28px; }
.r-label { font-size: 18px; font-weight: 300; color: #666; margin-left: -1px; }
.r-label-low { padding-top: 3px; }
.field-sel { width: 252px; padding: 0 17px 0 17px; justify-content: space-between; }
.field-color { padding-left: 4px; justify-content: flex-start; }
.sel-chev { width: 13px; height: 9px; fill: none; stroke: #8a94c4; stroke-width: 2; flex: none; }
.swatch { width: 39px; height: 39px; background: #000; border-radius: 3px; flex: none; }
.color-val { margin-left: 9px; margin-top: 2px; font-family: "Liberation Sans", sans-serif; font-size: 21px; color: #666; }
.field-color .sel-chev { margin-left: auto; }
.ess { width: 252px; display: flex; flex-direction: column; gap: 4px; }
.ess-top { display: flex; gap: 4px; }
.ess-btn { flex: 1; height: 47px; border: 1px solid #dcdee4; border-radius: 6px; display: flex; align-items: center; justify-content: center; position: relative; }
.ess-btn::after { content: ""; position: absolute; right: 3px; bottom: 3px; width: 0; height: 0; border-left: 8px solid transparent; border-bottom: 8px solid #999; }
.ess-on { background: #f1f3f7; }
.ess-b { font-family: "Liberation Sans", sans-serif; font-size: 25px; color: #666; }
.ess-ic { width: 19px; height: 19px; fill: none; stroke: #7b7b7b; stroke-width: 1.600; }
.ess-bot { display: flex; gap: 4px; }
.spin { flex: 1; height: 47px; border: 1px solid #dcdee4; border-radius: 6px; display: flex; overflow: hidden; }
.spin-lead { width: 49px; background: #fafafb; border-right: 1px solid #dcdee4; display: flex; align-items: baseline; justify-content: center; font-family: "Liberation Sans", sans-serif; color: #666; padding-top: 12px; flex: none; }
.aa-s { font-size: 13px; }
.aa-l { font-size: 25px; line-height: 22px; }
.lh-ic { width: 18px; height: 18px; fill: none; stroke: #777; stroke-width: 1.500; }
.spin-val { flex: 1; display: flex; align-items: center; padding: 2px 0 0 7px; font-family: "Liberation Sans", sans-serif; font-size: 21px; color: #666; }
.spin-ph { color: #b5b5b5; }
.spin-arrows { width: 22px; flex: none; border-left: 1px solid #dcdee4; display: flex; flex-direction: column; }
.spin-arrows svg { flex: 1; min-height: 0; width: 100%; padding: 7px 5px; fill: none; stroke: #999; stroke-width: 1; }
.spin-arrows svg:first-child { border-bottom: 1px solid #dcdee4; }
.more { margin: 37px 0 0 auto; width: 48px; height: 24px; border: 1px solid #eceef2; border-radius: 3px; display: flex; align-items: center; justify-content: center; gap: 4px; }
.more i { width: 8px; height: 8px; border-radius: 50%; background: #a9a9a9; }
.legend { margin-top: 13px; text-align: right; font-size: 18px; font-weight: 300; color: #666; }
.leg { height: 32px; line-height: 32px; position: relative; }
.dot { display: inline-block; width: 6px; height: 6px; border-radius: 50%; margin-right: 3px; vertical-align: 9px; }
.dot-web { background: #8d9bff; }
.dot-ios { background: #f9c06a; }
.dot-and { background: #2ecb75; }
.xy { display: flex; align-items: center; padding: 24px 24px 0 25px; font-family: "Liberation Sans", sans-serif; color: #666; font-size: 20.500px; }
.xy-l { width: 31px; flex: none; margin-left: -1px; }
.xy-y { width: 21px; margin-left: 14px; }
.xy-field { width: 156px; height: 47px; border: 1px solid #dcdee4; border-radius: 6px; display: flex; overflow: hidden; }
.xy-val { flex: 1; min-width: 0; overflow: hidden; padding: 12px 0 0 17px; white-space: nowrap; }
.xy-field .spin-arrows { width: 33px; }
.xy-field .spin-arrows svg { padding: 7px 9px; }
.r-thumb { position: absolute; right: 0; top: 5px; width: 12px; height: 363px; background: #c4c4c4; border-radius: 6px; }
.chat { position: absolute; left: 308px; top: 672px; width: 90px; height: 90px; border-radius: 50%; background: #f2a945; box-shadow: 0 2px 30px rgba(0, 0, 0, 0.1); display: flex; align-items: center; justify-content: center; }
.chat-ic { width: 42px; height: 48px; margin-top: 2px; }

/* taskbar */
.taskbar { height: 72px; flex: none; background: linear-gradient(90deg, #1d1d1d, #2a2a2a); display: flex; align-items: stretch; color: #eee; font-family: "Noto Sans", sans-serif; position: relative; }
.weather { width: 464px; flex: none; display: flex; align-items: center; padding-left: 30px; }
.weather-ic { width: 34px; height: 30px; flex: none; }
.weather-txt { margin: 2px 0 0 13px; font-size: 18px; line-height: 25px; letter-spacing: -0.2px; }
.weather-txt div:last-child { color: #d8d8d8; }
.tb-icons { display: flex; }
.tb { width: 66px; height: 72px; display: flex; align-items: center; justify-content: center; position: relative; padding-bottom: 0; }
.tb svg { width: 34px; height: 34px; margin-top: 1px; }
.tb-run::after { content: ""; position: absolute; left: 29px; bottom: 5px; width: 8px; height: 5px; border-radius: 3px; background: #9a9a9a; }
.tb-active::before { content: ""; position: absolute; left: 3px; top: 7px; width: 60px; height: 60px; background: #3a3a3a; border-radius: 5px; }
.tb-active svg { position: relative; }
.tb-active::after { content: ""; position: absolute; left: 18px; bottom: 5px; width: 26px; height: 6px; border-radius: 3px; background: #5cc0f5; }
.tb-badge { position: absolute; border-radius: 50%; font-style: normal; font-size: 13px; color: #ddd; display: flex; align-items: center; justify-content: center; }
.tb-badge-y { left: 37px; top: 12px; width: 25px; height: 30px; background: #ffc107; }
.tb-badge-t { left: 38px; top: 12px; width: 24px; height: 30px; background: #0b8074; }
.tb-badge-b { left: 31px; top: 12px; width: 25px; height: 30px; background: #0b5aa0; }
.help-q { font-family: "Noto Sans", sans-serif; font-size: 22px; font-weight: 700; fill: #fff; text-anchor: middle; }
.x-t { font-family: "Noto Sans", sans-serif; font-size: 13px; font-weight: 700; fill: #fff; text-anchor: middle; }
.tray { margin-left: auto; display: flex; align-items: center; padding-right: 28px; }
.tray-up { width: 18px; height: 12px; fill: none; stroke: #eee; stroke-width: 1.400; }
.tray-cloud { width: 25px; height: 22px; margin-left: 12px; }
.tray-sync { width: 24px; height: 30px; margin-left: 12px; }
.lang { margin: 2px 0 0 20px; width: 40px; text-align: center; font-size: 17px; line-height: 23px; }
.tray-wifi { width: 26px; height: 22px; margin-left: 24px; }
.tray-vol { width: 25px; height: 24px; margin-left: 10px; }
.tray-bat { width: 27px; height: 24px; margin-left: 10px; }
.clock { margin: 2px 0 0 17px; width: 80px; text-align: right; font-size: 17px; line-height: 24px; letter-spacing: -0.3px; }
.notif { width: 24px; height: 24px; margin-left: 13px; border-radius: 50%; background: #4dbdfb; color: #102430; font-size: 15px; display: flex; align-items: center; justify-content: center; }
```
